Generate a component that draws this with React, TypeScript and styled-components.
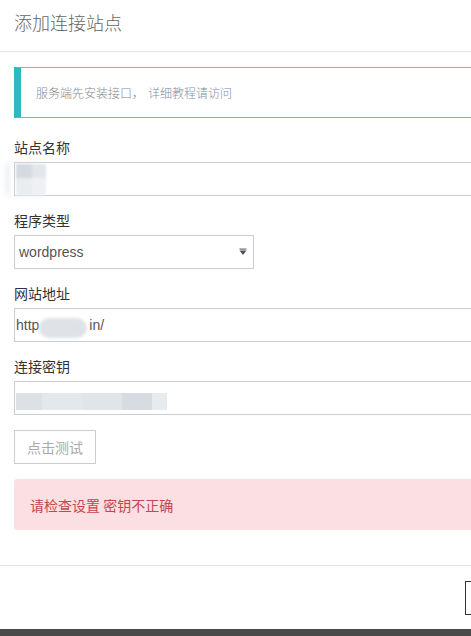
import React from "react";
import styled, { createGlobalStyle } from "styled-components";

const GlobalStyle = createGlobalStyle`
	html, body {
		margin: 0;
		padding: 0;
		background: #ffffff;
		overflow: hidden;
	}
	* {
		box-sizing: border-box;
	}
`;

const cjkSans = `"Liberation Sans", Arial, "Noto Sans CJK SC", sans-serif`;

interface Shade {
	w: number;
	c: string;
}

const keyShades: Shade[] = [
	{ w: 26, c: "#dde1e6" },
	{ w: 40, c: "#e4e7eb" },
	{ w: 40, c: "#e1e4e9" },
	{ w: 30, c: "#d7dce2" },
	{ w: 15, c: "#e8ebee" },
];

const App: React.FC = () => {
	return (
		<Page>
			<GlobalStyle />
			<Modal>
				<Header>
					<Title>添加连接站点</Title>
				</Header>
				<Body>
					<Notice>
						<span>服务端先安装接口</span>
						<Comma>，</Comma>
						<NoticeLink>详细教程请访问</NoticeLink>
					</Notice>

					<Group>
						<Label>站点名称</Label>
						<Field>
							<NameBlur>
								<Cell color="#d4dae1" />
								<Cell color="#e3e7eb" />
								<Cell color="#eaedf0" />
								<Cell color="#eef0f3" />
							</NameBlur>
						</Field>
					</Group>

					<Group>
						<Label>程序类型</Label>
						<Select>
							<span>wordpress</span>
							<svg width="8" height="8" viewBox="0 0 8 8">
								<rect x="0.5" y="0.5" width="7" height="1.2" fill="#6b6f75" />
								<path d="M0.5 2.4 H7.5 L4 7 Z" fill="#4c5157" />
							</svg>
						</Select>
					</Group>

					<Group>
						<Label>网站地址</Label>
						<Field>
							<FieldText>http</FieldText>
							<UrlBlur />
							<FieldText>in/</FieldText>
						</Field>
					</Group>

					<Group>
						<Label>连接密钥</Label>
						<Field>
							<KeyBlur>
								{keyShades.map((s, i) => (
									<Segment key={i} style={{ width: s.w, background: s.c }} />
								))}
							</KeyBlur>
						</Field>
					</Group>

					<TestButton>点击测试</TestButton>

					<Alert>请检查设置 密钥不正确</Alert>
				</Body>
				<Footer>
					<FooterButton aria-label="确定" />
				</Footer>
			</Modal>
		</Page>
	);
};

const Page = styled.div`
	width: 471px;
	height: 636px;
	overflow: hidden;
	background: linear-gradient(to bottom, #383838, #4a4a4a);
`;

const Modal = styled.div`
	width: 562px;
	height: 629px;
	background: #ffffff;
	display: flex;
	flex-direction: column;
	font-family: ${cjkSans};
`;

const Header = styled.div`
	height: 52px;
	padding: 10px 14px 0;
	border-bottom: 1px solid #e5e5e5;
`;

const Title = styled.div`
	font-size: 18px;
	line-height: 24px;
	color: #666666;
	font-family: "Noto Sans CJK SC", sans-serif;
	font-weight: 300;
`;

const Body = styled.div`
	flex: 1;
	padding: 15px 14px 0;
	display: flex;
	flex-direction: column;
	align-items: flex-start;
`;

const Notice = styled.div`
	width: 100%;
	height: 51px;
	border: 1px solid #5fc4c6;
	border-left: 7px solid #2cb9c2;
	padding-left: 15px;
	display: flex;
	align-items: center;
	font-size: 12px;
	color: #8a8a8a;
	font-family: "Noto Sans CJK SC", sans-serif;
	font-weight: 300;
	margin-bottom: 19px;
`;

const Comma = styled.span`
	display: inline-block;
	width: 16px;
`;

const NoticeLink = styled.span`
	color: #7f8ea0;
`;

const Group = styled.div`
	width: 100%;
	display: flex;
	flex-direction: column;
	gap: 5px;
	margin-bottom: 14px;
`;

const Label = styled.div`
	font-size: 14px;
	line-height: 20px;
	color: #333333;
	font-family: "Noto Sans CJK SC", sans-serif;
`;

const Field = styled.div`
	width: 100%;
	height: 34px;
	border: 1px solid #cccccc;
	display: flex;
	align-items: center;
	padding-left: 1px;
	font-size: 14px;
	color: #555555;
`;

const FieldText = styled.span`
	font-family: "Liberation Sans", Arial, sans-serif;
	line-height: 20px;
`;

const NameBlur = styled.div`
	margin-left: -6px;
	width: 36px;
	height: 32px;
	display: grid;
	grid-template-columns: 16px 14px;
	grid-template-rows: 14px 17px;
	padding: 1px 0 0 6px;
	filter: blur(0.8px);
	box-shadow: -4px 0 6px rgba(230, 234, 238, 0.8);
`;

const Cell = styled.div<{ color: string }>`
	background: ${(p) => p.color};
`;

const UrlBlur = styled.div`
	width: 48px;
	height: 20px;
	margin: 6px 2px 0 0;
	border-radius: 10px;
	background: #dfe3e8;
	filter: blur(1.5px);
`;

const KeyBlur = styled.div`
	display: flex;
	height: 17px;
	margin-top: 6px;
	filter: blur(0.6px);
`;

const Segment = styled.div`
	height: 100%;
`;

const Select = styled.div`
	width: 240px;
	height: 34px;
	border: 1px solid #cccccc;
	display: flex;
	align-items: center;
	justify-content: space-between;
	padding: 0 6px 0 4px;
	font-family: "Liberation Sans", Arial, sans-serif;
	font-size: 14px;
	color: #555555;
`;

const TestButton = styled.button`
	margin-top: 1px;
	height: 34px;
	padding: 0 12px;
	border: 1px solid #cccccc;
	border-radius: 0;
	background: #ffffff;
	color: #aaaaaa;
	font-size: 14px;
	font-family: "Noto Sans CJK SC", sans-serif;
	margin-bottom: 15px;
`;

const Alert = styled.div`
	width: 100%;
	height: 51px;
	border-radius: 3px;
	background: #fcdfe2;
	color: #c4464f;
	font-size: 14px;
	font-family: "Noto Sans CJK SC", sans-serif;
	display: flex;
	align-items: center;
	padding-left: 16px;
`;

const Footer = styled.div`
	height: 64px;
	border-top: 1px solid #e5e5e5;
	padding: 15px 15px 0 465px;
	display: flex;
	align-items: flex-start;
`;

const FooterButton = styled.button`
	width: 82px;
	height: 34px;
	border: 1px solid #333333;
	border-radius: 0;
	background: #ffffff;
`;

export default App;
